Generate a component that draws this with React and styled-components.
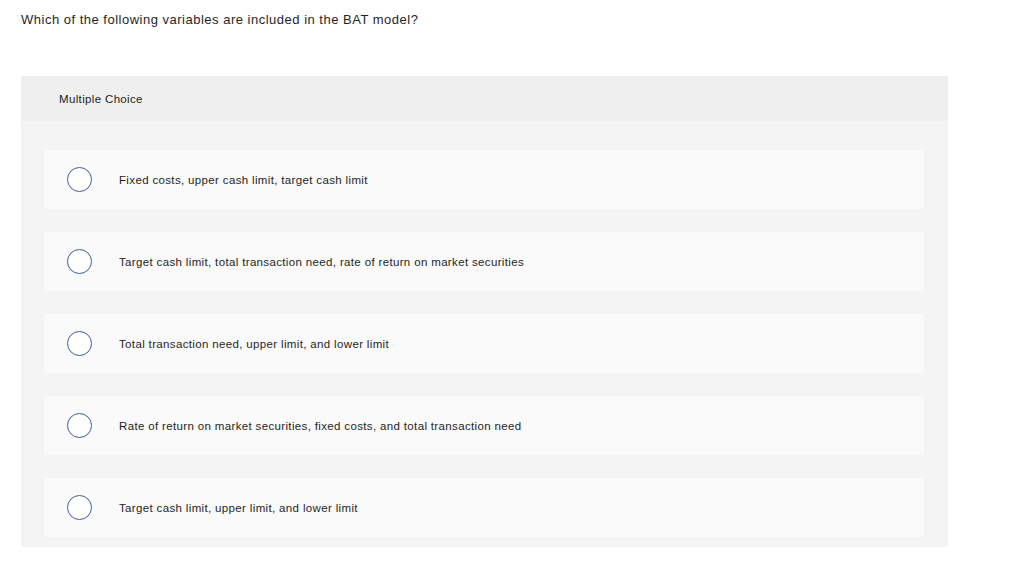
import React from 'react';
import styled, { createGlobalStyle } from 'styled-components';

const GlobalStyle = createGlobalStyle`
  body {
    margin: 0;
    background: #ffffff;
    font-family: "Liberation Sans", Arial, sans-serif;
    color: #1f1f1f;
  }
`;

const Page = styled.div`
  width: 1024px;
  height: 562px;
  padding: 12px 0 0 21px;
  box-sizing: border-box;
`;

const Question = styled.p`
  margin: 0;
  font-size: 13px;
  line-height: 16px;
  letter-spacing: 0.5px;
  color: #1f1f1f;
`;

const Panel = styled.div`
  margin-top: 48px;
  width: 927px;
  background: #f4f4f4;
  padding-bottom: 10px;
`;

const PanelHeader = styled.div`
  height: 45px;
  background: #efefef;
  display: flex;
  align-items: center;
  padding-left: 38px;
  font-size: 11.5px;
  letter-spacing: 0.35px;
  color: #222;
`;

const OptionList = styled.div`
  display: flex;
  flex-direction: column;
  gap: 23px;
  padding: 29px 24px 0 23px;
`;

const Option = styled.label`
  height: 59px;
  background: #fafafa;
  border-radius: 3px;
  display: flex;
  align-items: center;
  padding-left: 23px;
  cursor: pointer;
`;

const Radio = styled.span`
  width: 25px;
  height: 25px;
  box-sizing: border-box;
  border: 1px solid #3d5f96;
  border-radius: 50%;
  background: #fff;
  flex-shrink: 0;
`;

const OptionText = styled.span`
  margin-left: 27px;
  font-size: 11.5px;
  letter-spacing: 0.35px;
  color: #1f1f1f;
`;

const options = [
  'Fixed costs, upper cash limit, target cash limit',
  'Target cash limit, total transaction need, rate of return on market securities',
  'Total transaction need, upper limit, and lower limit',
  'Rate of return on market securities, fixed costs, and total transaction need',
  'Target cash limit, upper limit, and lower limit',
];

export default function App() {
  return (
    <>
      <GlobalStyle />
      <Page>
        <Question>Which of the following variables are included in the BAT model?</Question>
        <Panel>
          <PanelHeader>Multiple Choice</PanelHeader>
          <OptionList>
            {options.map((text) => (
              <Option key={text}>
                <Radio />
                <OptionText>{text}</OptionText>
              </Option>
            ))}
          </OptionList>
        </Panel>
      </Page>
    </>
  );
}
